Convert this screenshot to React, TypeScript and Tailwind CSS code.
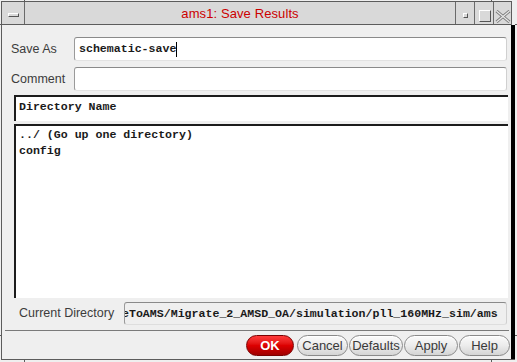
import React from "react";

const mono = "font-['Liberation_Mono','DejaVu_Sans_Mono',monospace] font-bold text-[11.6px] text-[#1a1a1a]";

function Btn({ label, w, mr }: { label: string; w: string; mr: string }) {
  return (
    <div
      className={`${w} ${mr} h-[21px] rounded-full border border-[#8a8a8a] bg-gradient-to-b from-[#fbfbfb] via-[#ececec] to-[#d4d4d4] flex items-center justify-center text-[13px] text-[#3a3a3a] shadow-[inset_0_1px_0_#ffffff]`}
    >
      {label}
    </div>
  );
}

export default function App() {
  return (
    <div className="relative w-[517px] h-[362px] bg-[#efefef] overflow-hidden pl-[1px] pt-[1px] font-['Liberation_Sans',Arial,sans-serif]">
      {/* frame resize-handle ticks */}
      <div className="absolute left-[24px] top-0 w-[1px] h-[1px] bg-[#5c5c5c]" />
      <div className="absolute left-[491px] top-0 w-[1px] h-[1px] bg-[#5c5c5c]" />
      <div className="absolute left-[24px] top-[360px] w-[1px] h-[2px] bg-[#5c5c5c]" />
      <div className="absolute left-[491px] top-[360px] w-[1px] h-[2px] bg-[#5c5c5c]" />
      <div className="absolute left-0 top-[24px] w-[1px] h-[1px] bg-[#5c5c5c]" />
      <div className="absolute left-0 top-[335px] w-[1px] h-[1px] bg-[#5c5c5c]" />
      <div className="absolute left-[515px] top-[24px] w-[2px] h-[1px] bg-[#5c5c5c]" />
      <div className="absolute left-[515px] top-[335px] w-[2px] h-[1px] bg-[#5c5c5c]" />

      <div className="w-[514px] h-[359px] border-l border-b border-[#5c5c5c] flex flex-col">
        {/* title bar */}
        <div className="w-[510px] h-[24px] border-t border-r border-b border-[#5c5c5c] bg-[#d9d9d9] flex">
          <div className="w-[23px] h-full border-r border-[#6a6a6a] flex items-start justify-center pt-[11px]">
            <div className="w-[11px] h-[4px] bg-[#d9d9d9] border-t border-l border-white border-b border-r border-b-[#555] border-r-[#555]" />
          </div>
          <div className="flex-1 flex items-center justify-center text-[13px] text-[#cc0000] tracking-[0.1px] pt-[1px]">
            ams1: Save Results
          </div>
          <div className="w-[19px] h-full border-l border-[#6a6a6a] flex items-start justify-center pt-[11px] pl-[1px]">
            <div className="w-[5px] h-[5px] bg-[#d9d9d9] border-t border-l border-white border-b border-r border-b-[#555] border-r-[#555]" />
          </div>
          <div className="w-[19px] h-full border-l border-[#6a6a6a] flex items-start justify-center pt-[8px] pl-[1px]">
            <div className="w-[12px] h-[12px] bg-[#d9d9d9] border-t border-l border-white border-b border-r border-b-[#555] border-r-[#555]" />
          </div>
          <div className="w-[18px] h-full border-l border-[#6a6a6a] flex items-start justify-center pt-[8px]">
            <svg width="16" height="13" viewBox="0 0 16 13">
              <path d="M1.5 1 L14.5 12 M14.5 1 L1.5 12" stroke="#7a7a7a" strokeWidth="3" fill="none" />
              <path d="M1.5 1 L14.5 12 M14.5 1 L1.5 12" stroke="#e8e8e8" strokeWidth="1.2" fill="none" />
            </svg>
          </div>
        </div>

        {/* body */}
        <div className="w-[513px] flex-1 border-r-4 border-[#000] bg-[#efefef] flex flex-col pl-[9px] pt-[12px]">
          <div className="flex items-center h-[24px]">
            <div className="w-[63px] text-[12.5px] text-[#3c3c3c] pt-[1px]">Save As</div>
            <div className="w-[433px] h-[24px] bg-white rounded-[3px] border border-t-[#8a8a8a] border-l-[#9a9a9a] border-r-[#d0d0d0] border-b-[#e2e2e2] flex items-center pl-[4px]">
              <span className={mono}>schematic-save</span>
              <span className="w-[1px] h-[15px] bg-black" />
            </div>
          </div>
          <div className="flex items-center h-[24px] mt-[6px]">
            <div className="w-[63px] text-[12.5px] text-[#3c3c3c] pt-[1px]">Comment</div>
            <div className="w-[433px] h-[24px] bg-white rounded-[3px] border border-t-[#8a8a8a] border-l-[#9a9a9a] border-r-[#d0d0d0] border-b-[#e2e2e2]" />
          </div>

          <div className="ml-[3px] mt-[4px] w-[494px] h-[26px] bg-white border-t-2 border-l-2 border-[#1c1c1c] pl-[3px] pt-[2px]">
            <div className={`${mono} leading-[16px]`}>Directory Name</div>
          </div>

          <div className="ml-[3px] mt-[3px] w-[494px] h-[174px] bg-white border-t-2 border-l-2 border-[#1c1c1c] pl-[3px] pt-[1px]">
            <div className={`${mono} leading-[16px]`}>../ (Go up one directory)</div>
            <div className={`${mono} leading-[16px]`}>config</div>
          </div>

          <div className="flex items-center mt-[4px] h-[23px]">
            <div className="ml-[8px] w-[105px] text-[12.5px] text-[#3c3c3c]">Current Directory</div>
            <div className="w-[383px] h-[23px] bg-[#efefef] rounded-[3px] border border-t-[#8a8a8a] border-l-[#9a9a9a] border-r-[#d0d0d0] border-b-[#dedede] overflow-hidden flex items-center">
              <span className={`${mono} whitespace-nowrap ml-[-3px]`}>eToAMS/Migrate_2_AMSD_OA/simulation/pll_160MHz_sim/ams</span>
            </div>
          </div>

          <div className="mt-[5px] ml-[-6px] w-[504px] h-[1px] bg-[#7a7a7a]" />

          <div className="mt-[4px] h-[21px] flex justify-end pr-[1px]">
            <div className="w-[48px] mr-[3px] h-[21px] rounded-full border border-[#7a0000] bg-gradient-to-b from-[#ff3a3a] via-[#dd0000] to-[#a00000] flex items-center justify-center text-[13px] font-bold text-white">
              OK
            </div>
            <Btn label="Cancel" w="w-[51px]" mr="mr-[1px]" />
            <Btn label="Defaults" w="w-[54px]" mr="mr-[1px]" />
            <Btn label="Apply" w="w-[54px]" mr="mr-[1px]" />
            <Btn label="Help" w="w-[51px]" mr="mr-[0px]" />
          </div>
        </div>
      </div>
    </div>
  );
}
